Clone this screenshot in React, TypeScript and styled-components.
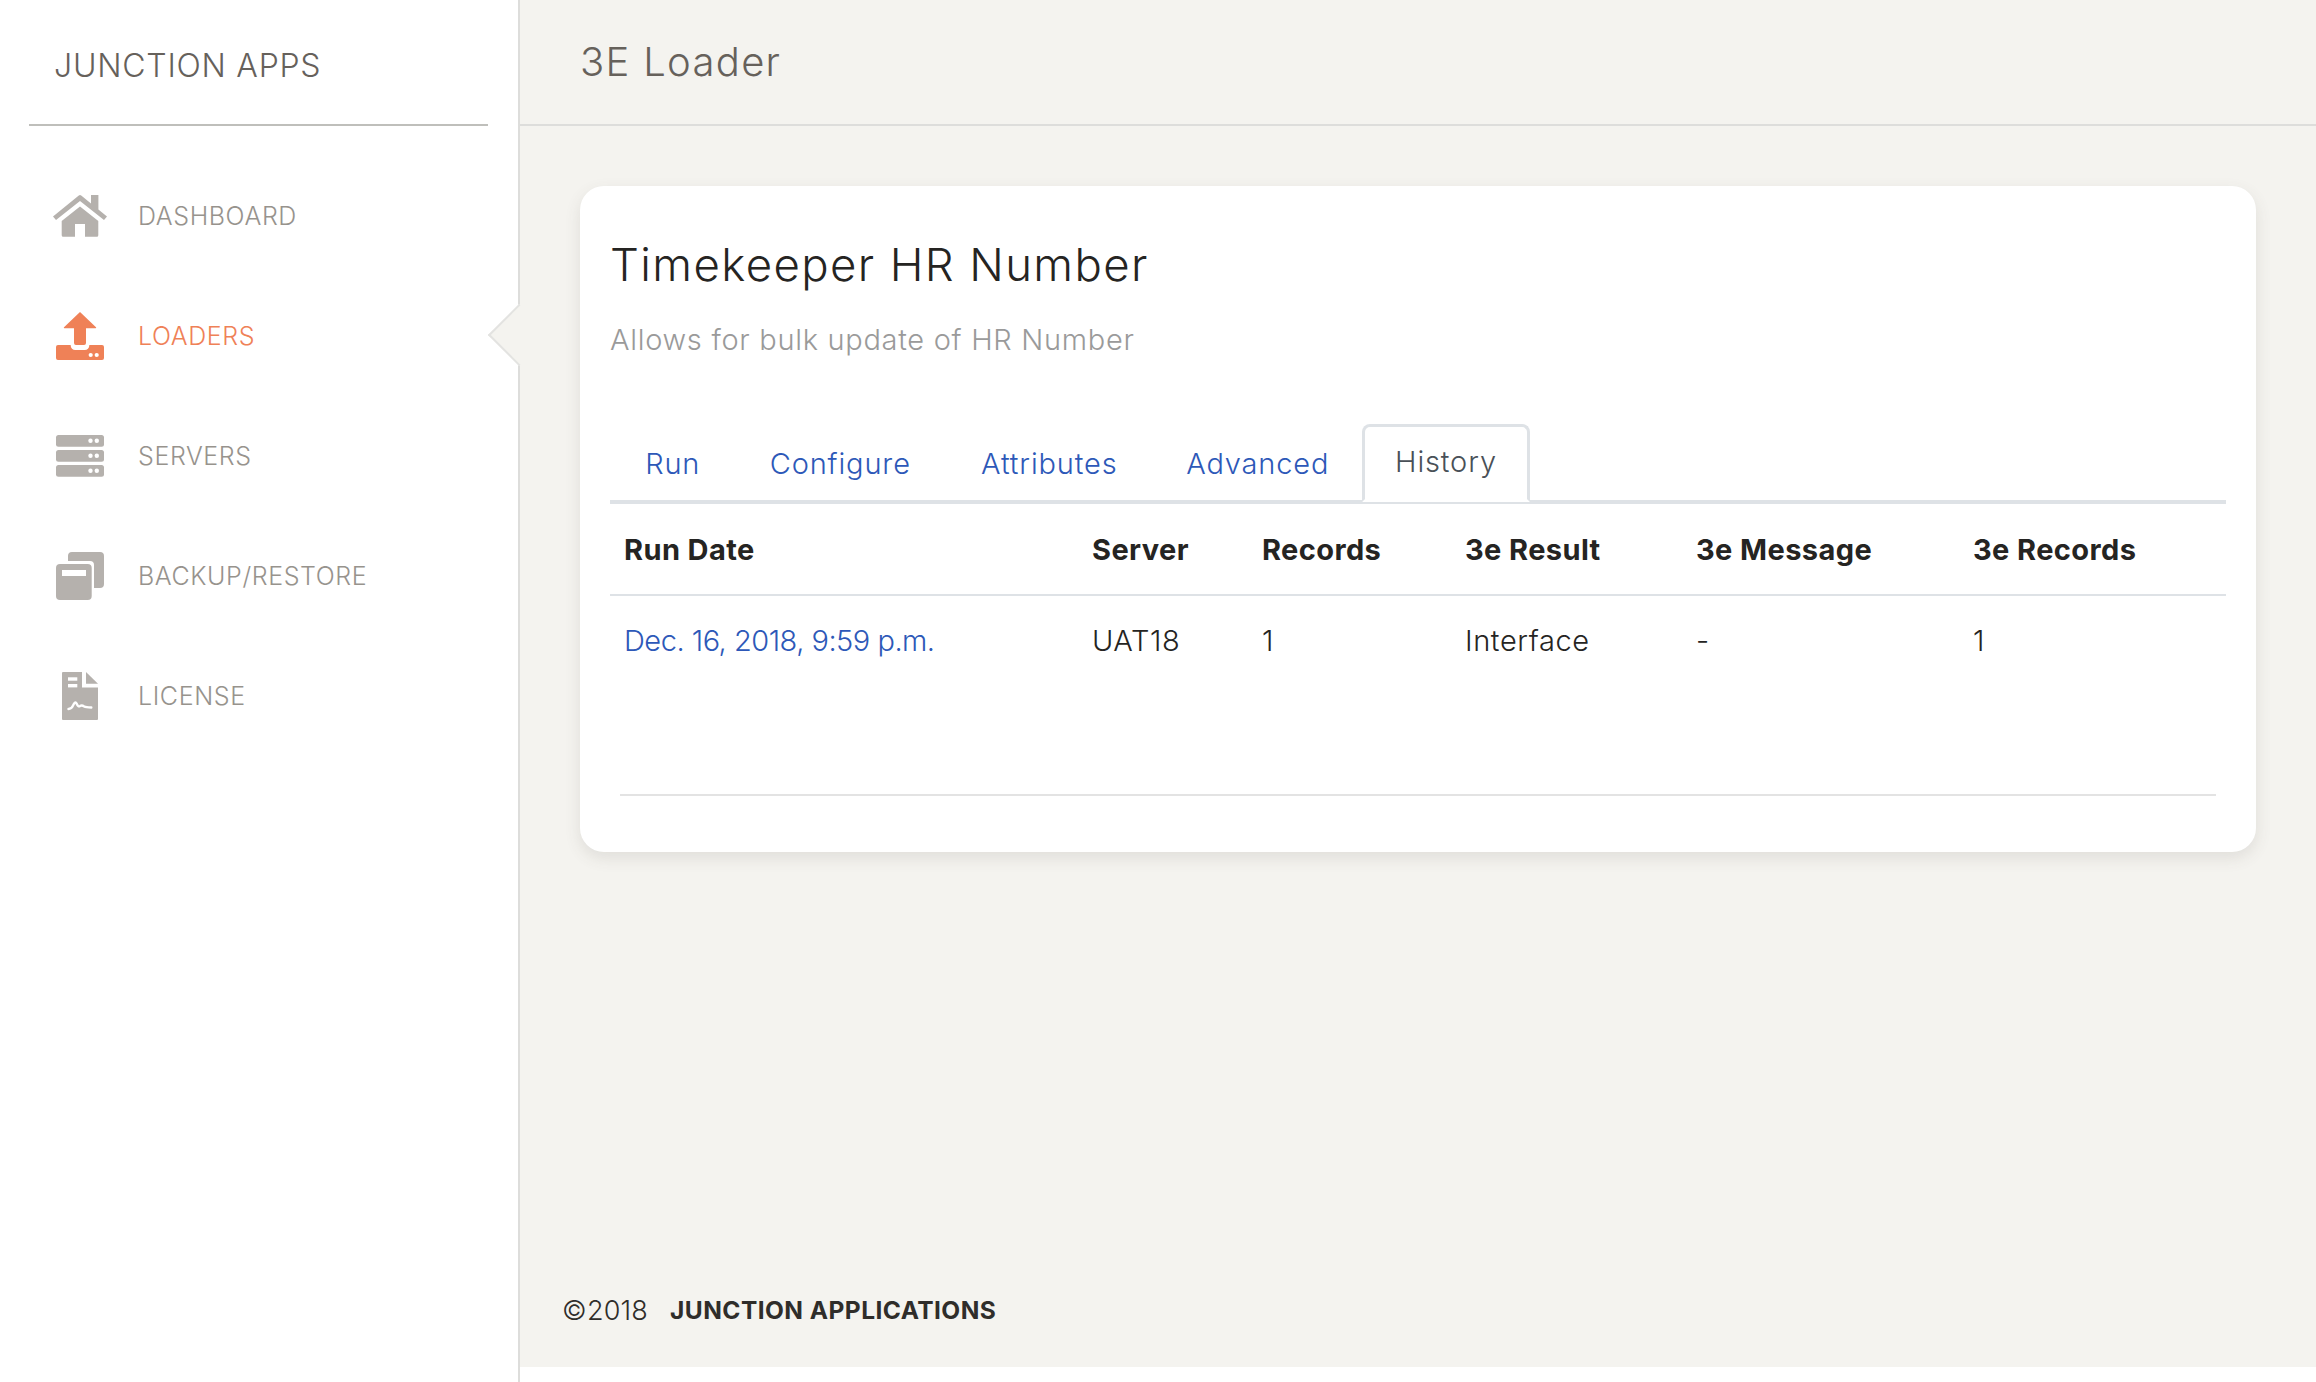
import React from "react";
import styled, { createGlobalStyle } from "styled-components";

const Global = createGlobalStyle`
  * { box-sizing: border-box; }
  html, body { margin: 0; padding: 0; height: 100%; background: #fff; }
  body { font-family: Inter, "Liberation Sans", sans-serif; font-weight: 300; color: #252422; }
`;

const Page = styled.div`
  display: flex;
  width: 2316px;
  height: 1382px;
  overflow: hidden;
`;
const Sidebar = styled.aside`
  position: relative;
  width: 520px;
  flex: none;
  border-right: 2px solid #dddddb;
  background: #fff;
  z-index: 1;
`;
const Brand = styled.div`
  height: 126px;
  margin: 0 30px 0 29px;
  padding: 6px 0 0 25px;
  border-bottom: 2px solid #bfbfbb;
  display: flex;
  align-items: center;
  font-size: 32px;
  letter-spacing: 0.75px;
  color: #66615b;
`;
const Nav = styled.nav`
  display: flex;
  flex-direction: column;
  padding-top: 30px;
`;
const NavItem = styled.a<{ $active?: boolean }>`
  position: relative;
  height: 120px;
  display: flex;
  align-items: center;
  gap: 31px;
  padding-left: 53px;
  font-size: 25px;
  letter-spacing: 0.6px;
  color: ${(p) => (p.$active ? "#ef8157" : "#97938d")};
  &::after {
    content: "";
    display: ${(p) => (p.$active ? "block" : "none")};
    position: absolute;
    right: -23px;
    top: 37px;
    width: 42px;
    height: 42px;
    transform: rotate(45deg);
    background: #f4f3ef;
    border-left: 2px solid #e3e3e1;
    border-bottom: 2px solid #e3e3e1;
  }
`;
const NavIcon = styled.svg`
  width: 54px;
  height: 48px;
  flex: none;
  fill: currentColor;
`;
const IconTint = styled.span<{ $active?: boolean }>`
  display: flex;
  color: ${(p) => (p.$active ? "#ef8157" : "#b5b1ad")};
`;
const Main = styled.main`
  flex: 1;
  height: 1367px;
  background: #f4f3ef;
  display: flex;
  flex-direction: column;
`;
const TopBar = styled.header`
  height: 126px;
  flex: none;
  border-bottom: 2px solid #dddddb;
  padding: 0 0 2px 60px;
  display: flex;
  align-items: center;
  font-size: 40px;
  letter-spacing: 1.3px;
  color: #66615b;
`;
const Content = styled.div`
  flex: 1;
  padding: 60px 60px 0 60px;
`;
const Card = styled.section`
  height: 666px;
  background: #fff;
  border-radius: 24px;
  box-shadow: 0 6px 16px rgba(80, 75, 65, 0.12);
  padding: 0 30px;
  display: flex;
  flex-direction: column;
`;
const Title = styled.h1`
  margin: 54px 0 0;
  height: 50px;
  font-size: 45.5px;
  line-height: 50px;
  font-weight: 300;
  letter-spacing: 1.4px;
  color: #252422;
`;
const Subtitle = styled.p`
  margin: 32px 0 0;
  height: 36px;
  font-size: 29px;
  line-height: 36px;
  letter-spacing: 0.7px;
  color: #9a9a9a;
`;
const Tabs = styled.div`
  margin-top: 66px;
  height: 80px;
  display: flex;
  border-bottom: 4px solid #dee2e6;
`;
const Tab = styled.a<{ $w: number; $active?: boolean }>`
  width: ${(p) => p.$w}px;
  height: 78px;
  padding-bottom: 3px;
  display: flex;
  align-items: center;
  justify-content: center;
  font-size: 29px;
  letter-spacing: 0.85px;
  border-radius: 8px 8px 0 0;
  border: 3px solid ${(p) => (p.$active ? "#dee2e6" : "transparent")};
  border-bottom: ${(p) => (p.$active ? "3px solid #fff" : "none")};
  background: ${(p) => (p.$active ? "#fff" : "transparent")};
  color: ${(p) => (p.$active ? "#495057" : "#2d58b8")};
`;
const Table = styled.table`
  width: 100%;
  table-layout: fixed;
  border-collapse: collapse;
`;
const Col = styled.col<{ $w: number }>`
  width: ${(p) => p.$w}px;
`;
const Th = styled.th`
  height: 91px;
  padding: 0 0 0 14px;
  text-align: left;
  font-size: 29px;
  font-weight: 700;
  letter-spacing: 0.4px;
  color: #252422;
  border-bottom: 2px solid #dee2e6;
`;
const Td = styled.td`
  height: 89px;
  padding: 0 0 0 14px;
  font-size: 29px;
  letter-spacing: 0.6px;
  color: #252422;
`;
const RowLink = styled.a`
  color: #2d58b8;
  letter-spacing: -0.5px;
`;
const CardRule = styled.hr`
  margin: 110px 10px 0;
  border: 0;
  border-top: 2px solid #e3e3e3;
`;
const Footer = styled.footer`
  height: 114px;
  flex: none;
  padding-left: 42px;
  display: flex;
  gap: 22px;
  align-items: center;
  font-size: 27px;
  letter-spacing: 0.2px;
  color: #2f2d2a;
`;
const Maker = styled.strong`
  font-weight: 700;
  font-size: 24.5px;
  letter-spacing: 0.45px;
`;

const HomeIcon = () => (
  <NavIcon viewBox="0 0 54 48">
    <path d="M0 24.6 25.8 3.4a2 2 0 0 1 2.4 0L38 11.5V3h7.4v14.6L54 24.6 51 28 27 9 3 28z" />
    <path d="M27 14.6 45.3 29v14.2a1.5 1.5 0 0 1-1.5 1.5H32V32H22v12.7H10.2a1.5 1.5 0 0 1-1.5-1.5V29z" />
  </NavIcon>
);
const LoaderIcon = () => (
  <NavIcon viewBox="0 0 54 48">
    <path d="M27 0 43 15.2a.7.7 0 0 1-.5 1.1H33V31a2 2 0 0 1-2 2H23a2 2 0 0 1-2-2V16.3h-9.500a.7.7 0 0 1-.5-1.100z" />
    <path d="M5 33h12.700v.5a4.500 4.500 0 0 0 4.500 4.500h9.600a4.500 4.500 0 0 0 4.500-4.500V33H49a2 2 0 0 1 2 2v11a2 2 0 0 1-2 2H5a2 2 0 0 1-2-2V35a2 2 0 0 1 2-2z" />
    <circle cx="37.700" cy="43" r="2.100" fill="#fff" />
    <circle cx="43.700" cy="43" r="2.100" fill="#fff" />
  </NavIcon>
);
const ServerIcon = () => (
  <NavIcon viewBox="0 0 54 48">
    {[3, 18, 33].map((y) => (
      <g key={y}>
        <rect x="3" y={y} width="48" height="11.700" rx="2.500" />
        <circle cx="37.500" cy={y + 5.8} r="2.200" fill="#fff" />
        <circle cx="43.800" cy={y + 5.8} r="2.200" fill="#fff" />
      </g>
    ))}
  </NavIcon>
);
const BackupIcon = () => (
  <NavIcon viewBox="0 0 54 48">
    <path d="M19 0h28a4 4 0 0 1 4 4v28a4 4 0 0 1-4 4h-6V13a4 4 0 0 0-4-4H15V4a4 4 0 0 1 4-4z" />
    <rect x="3" y="12" width="35.700" height="36" rx="4" />
    <rect x="9" y="18" width="24" height="6" fill="#fff" />
  </NavIcon>
);
const LicenseIcon = () => (
  <NavIcon viewBox="0 0 54 48">
    <path d="M33 0 45 11.700H33z" />
    <path d="M10 0h19v15.500h16V47a1 1 0 0 1-1 1H10a1 1 0 0 1-1-1V1a1 1 0 0 1 1-1z" />
    <rect x="15" y="5.300" width="9.300" height="3.400" fill="#fff" />
    <rect x="15" y="12" width="9.300" height="3.400" fill="#fff" />
    <path d="M15.500 37c2.500 0 3.500-1 4.600-3.600 1-2.400 2.400-4.200 3.600-1.600 1 2.200 2 3.200 3.400 2.200 1.300-1 2.700-.6 4.200.6 1.400.9 4 .9 7 .9" fill="none" stroke="#fff" strokeWidth="2.400" strokeLinecap="round" />
  </NavIcon>
);

const items = [
  { label: "DASHBOARD", icon: <HomeIcon /> },
  { label: "LOADERS", icon: <LoaderIcon />, active: true },
  { label: "SERVERS", icon: <ServerIcon /> },
  { label: "BACKUP/RESTORE", icon: <BackupIcon /> },
  { label: "LICENSE", icon: <LicenseIcon /> },
];
const tabs = [
  { label: "Run", w: 125.5 },
  { label: "Configure", w: 209.5 },
  { label: "Attributes", w: 208.5 },
  { label: "Advanced", w: 208.5 },
  { label: "History", w: 168, active: true },
];
const cols = [468, 170, 203, 231, 277, 267];
const heads = ["Run Date", "Server", "Records", "3e Result", "3e Message", "3e Records"];

export default function App() {
  return (
    <Page>
      <Global />
      <Sidebar>
        <Brand>JUNCTION APPS</Brand>
        <Nav>
          {items.map((it) => (
            <NavItem key={it.label} $active={it.active}>
              <IconTint $active={it.active}>{it.icon}</IconTint>
              {it.label}
            </NavItem>
          ))}
        </Nav>
      </Sidebar>
      <Main>
        <TopBar>3E Loader</TopBar>
        <Content>
          <Card>
            <Title>Timekeeper HR Number</Title>
            <Subtitle>Allows for bulk update of HR Number</Subtitle>
            <Tabs>
              {tabs.map((t) => (
                <Tab key={t.label} $w={t.w} $active={t.active}>{t.label}</Tab>
              ))}
            </Tabs>
            <Table>
              <colgroup>
                {cols.map((w, i) => <Col key={i} $w={w} />)}
              </colgroup>
              <thead>
                <tr>{heads.map((h) => <Th key={h}>{h}</Th>)}</tr>
              </thead>
              <tbody>
                <tr>
                  <Td><RowLink>Dec. 16, 2018, 9:59 p.m.</RowLink></Td>
                  <Td>UAT18</Td>
                  <Td>1</Td>
                  <Td>Interface</Td>
                  <Td>-</Td>
                  <Td>1</Td>
                </tr>
              </tbody>
            </Table>
            <CardRule />
          </Card>
        </Content>
        <Footer>
          <span>©2018</span>
          <Maker>JUNCTION APPLICATIONS</Maker>
        </Footer>
      </Main>
    </Page>
  );
}
